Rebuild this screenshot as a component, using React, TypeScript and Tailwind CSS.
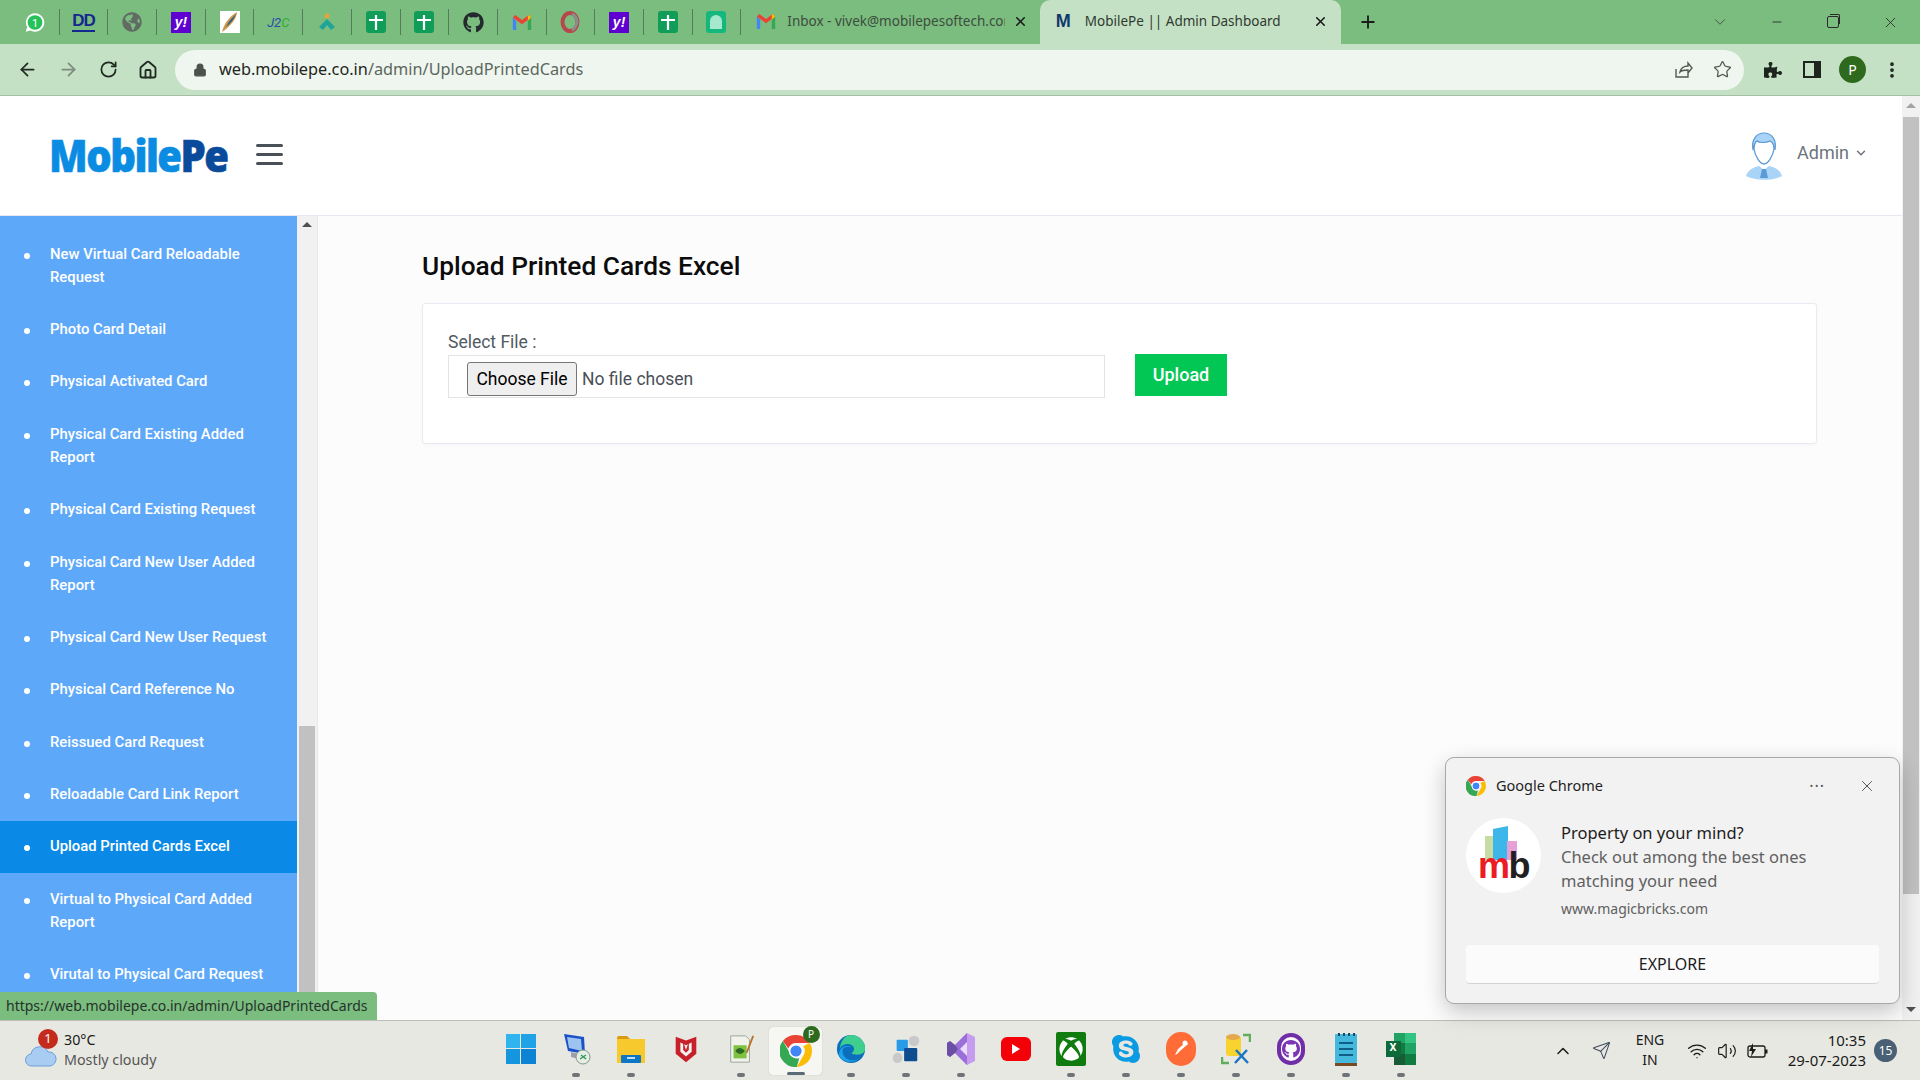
import { ArrowLeft, ArrowRight, ChevronDown, ChevronUp, Home, Lock, Minus, MoreVertical, Plus, RotateCw, Send, Star, Volume2, Wifi, X } from 'lucide-react';
import { FaGithub, FaGlobeAmericas, FaPuzzlePiece, FaSkype, FaXbox } from 'react-icons/fa';

const menuItems = [
  'New Virtual Card Reloadable Request',
  'Photo Card Detail',
  'Physical Activated Card',
  'Physical Card Existing Added Report',
  'Physical Card Existing Request',
  'Physical Card New User Added Report',
  'Physical Card New User Request',
  'Physical Card Reference No',
  'Reissued Card Request',
  'Reloadable Card Link Report',
  'Upload Printed Cards Excel',
  'Virtual to Physical Card Added Report',
  'Virutal to Physical Card Request',
];

function GmailIcon() {
  return (
    <svg viewBox="0 0 24 20" className="w-[20px] h-[17px]">
      <path d="M1 4v15h4V8z" fill="#4285f4" />
      <path d="M19 8v11h4V4z" fill="#34a853" />
      <path d="M1 4l11 8 11-8-3-3-8 6-8-6z" fill="#ea4335" />
      <path d="M19 8l4-4-3-3-1 1z" fill="#fbbc04" />
    </svg>
  );
}

function GreenPlus() {
  return (
    <div className="w-[20px] h-[22px] rounded-[3px] bg-[#0f9d58] flex items-center justify-center">
      <svg viewBox="0 0 20 22" className="w-full h-full">
        <path d="M10 4v15M3 9h14" stroke="#fff" strokeWidth="2.2" />
      </svg>
    </div>
  );
}

function YahooIcon() {
  return (
    <div className="w-[20px] h-[21px] bg-[#5f01d1] flex items-center justify-center text-white text-[14px] font-bold italic leading-none font-['Liberation_Sans',sans-serif]">
      y!
    </div>
  );
}

function ChromeIcon({ size }: { size: string }) {
  return (
    <svg viewBox="4 4 40 40" className={size}>
      <path d="M24 4a20 20 0 0 1 17.3 10H24a10 10 0 0 0-9.5 7L7.6 11.500A20 20 0 0 1 24 4z" fill="#ea4335" />
      <path d="M41.300 14A20 20 0 0 1 25 44l8.300-14.500A10 10 0 0 0 33 18z" fill="#fbbc04" />
      <path d="M7.600 11.500l8.700 15A10 10 0 0 0 28 33.200L25 44A20 20 0 0 1 7.600 11.500z" fill="#34a853" />
      <circle cx="24" cy="24" r="8" fill="#4285f4" stroke="#fff" strokeWidth="2" />
    </svg>
  );
}

const pinnedTabs = [
  <svg viewBox="0 0 24 24" className="w-[22px] h-[23px]"><path d="M12 2a10 10 0 0 0-8.600 15L2 22l5-1.400A10 10 0 1 0 12 2z" fill="#fff" /><circle cx="12" cy="12" r="8" fill="#25c25a" /><text x="12" y="16.500" textAnchor="middle" fontSize="12" fill="#fff" fontFamily="Roboto">1</text></svg>,
  <div className="text-[#14288f] text-[17px] font-black tracking-[-1px] leading-none font-['Liberation_Sans',sans-serif] border-b-2 border-[#14288f] pb-px">DD</div>,
  <FaGlobeAmericas className="w-[20px] h-[20px] text-[#5f6b63]" />,
  <YahooIcon />,
  <svg viewBox="0 0 20 22" className="w-[20px] h-[22px]"><rect width="20" height="22" fill="#fff" /><path d="M2 21C4 12 10 5 17 1c0 6-6 14-15 20z" fill="#c99a45" /><path d="M6 16C9 10 12 7 16 3c-2 5-5 9-10 13z" fill="#2f5c8f" /></svg>,
  <div className="text-[13px] italic leading-none font-['Roboto',sans-serif]"><span className="text-[#2a4fa8]">J2</span><span className="text-[#2fae2f]">C</span></div>,
  <svg viewBox="0 0 20 20" className="w-[20px] h-[20px]"><circle cx="10" cy="4" r="2.500" fill="#e6a33c" /><path d="M10 7l8 8-4 3-4-5-4 5-4-3z" fill="#1fa598" /></svg>,
  <GreenPlus />,
  <GreenPlus />,
  <FaGithub className="w-[21px] h-[21px] text-[#24292e]" />,
  <GmailIcon />,
  <svg viewBox="0 0 20 22" className="w-[20px] h-[22px]"><ellipse cx="10" cy="11" rx="7.500" ry="9" fill="none" stroke="#b5484b" strokeWidth="4" /><path d="M12 3c4 2 5 6 5 8s-2 7-5 8" fill="none" stroke="#8c8c8c" strokeWidth="3" /></svg>,
  <YahooIcon />,
  <GreenPlus />,
  <div className="w-[20px] h-[22px] rounded-[3px] bg-[#14b87c] flex items-start justify-center pt-[4px]"><div className="w-[12px] h-[14px] rounded-t-full bg-[#a5e8cd]" /></div>,
];

const TaskDot = () => <div className="w-[8px] h-[4px] rounded-full bg-[#6f7478]" />;

const WindowsIcon = (
  <div className="grid grid-cols-2 gap-[1.500px] w-[30px] h-[30px]">
    <div className="bg-[#2fb4ee]" />
    <div className="bg-[#1fa3e6]" />
    <div className="bg-[#1495de]" />
    <div className="bg-[#0d84d3]" />
  </div>
);

const taskbarIcons = [
  { dot: false, icon: WindowsIcon },
  {
    dot: true,
    icon: (
      <svg viewBox="0 0 30 32" className="w-[30px] h-[32px]">
        <path d="M3 1l20 3 1 17-17-3z" fill="#1c50c8" />
        <path d="M6 4l14 2 1 12-13-3z" fill="#9dc3f0" />
        <path d="M10 19l12 3v5l-12-3z" fill="#9aa1aa" />
        <circle cx="22" cy="24" r="7" fill="#e7ece6" stroke="#7d9a88" />
        <path d="M19 26l6-4M20 22l5 4" stroke="#2f9e55" strokeWidth="1.500" />
      </svg>
    ),
  },
  {
    dot: true,
    icon: (
      <svg viewBox="0 0 30 28" className="w-[30px] h-[28px]">
        <path d="M1 3a2 2 0 0 1 2-2h8l3 3H1z" fill="#d99a12" />
        <rect x="1" y="4" width="28" height="24" fill="#f8c92c" />
        <rect x="5" y="20" width="20" height="8" rx="1" fill="#0f76c6" />
        <rect x="11" y="22" width="8" height="2" fill="#b9e0f7" />
      </svg>
    ),
  },
  {
    dot: false,
    icon: (
      <svg viewBox="0 0 26 32" className="w-[26px] h-[30px]">
        <path d="M2 3l11 4 11-4v18l-11 9-11-9z" fill="#c8202b" />
        <path d="M7 9l6 3 6-3v10l-6 5-6-5z" fill="#f3f3f0" />
        <path d="M10 8l3 9 3-9v9l-3 3-3-3z" fill="#c8202b" />
      </svg>
    ),
  },
  {
    dot: true,
    icon: (
      <svg viewBox="0 0 28 32" className="w-[28px] h-[30px]">
        <path d="M3 2h16l4 4v24H3z" fill="#f0f3ea" stroke="#9aa29a" />
        <rect x="6" y="12" width="14" height="14" fill="#7ec242" />
        <path d="M8 18c3-4 6-4 10 0-3 4-7 4-10 0z" fill="#2a6a22" />
        <path d="M20 20L27 2" stroke="#b8742a" strokeWidth="2" />
      </svg>
    ),
  },
  { dot: false, icon: null },
  {
    dot: true,
    icon: (
      <svg viewBox="0 0 32 32" className="w-[30px] h-[32px]">
        <circle cx="16" cy="16" r="15" fill="#0d6ebd" />
        <path d="M16 1a15 15 0 0 1 15 15c0 5-5 6-9 6-3 0-6-1-5-2 3-2 3-6 0-8-5-3-12 0-13 4C5 8 9 1 16 1z" fill="#3ecf8e" />
        <path d="M7 18c0 8 8 12 17 9-5 4-16 4-20-3-1-2-1-4 0-6 1-4 8-7 13-4-5-1-10 0-10 4z" fill="#1aa3e8" />
      </svg>
    ),
  },
  {
    dot: true,
    icon: (
      <svg viewBox="0 0 30 32" className="w-[30px] h-[30px]">
        <rect x="18" y="2" width="11" height="11" rx="5" fill="#c9c9c9" />
        <rect x="1" y="20" width="10" height="11" rx="5" fill="#c9c9c9" />
        <rect x="5" y="6" width="12" height="12" rx="1" fill="#2a9be8" />
        <rect x="13" y="15" width="14" height="14" rx="1" fill="#0d4d8f" />
      </svg>
    ),
  },
  {
    dot: true,
    icon: (
      <svg viewBox="0 0 30 34" className="w-[30px] h-[34px]">
        <path d="M21 1l8 4v24l-8 4-12-12-5 4-3-2V11l3-2 5 4z" fill="#c59cf0" />
        <path d="M21 1v32L9 21l-1-4 1-4z" fill="#9a6fd8" />
        <path d="M1 11l3-2 5 4 3 4-3 4-5 4-3-2z" fill="#6c4fa5" />
        <path d="M21 10l-7 7 7 7z" fill="#eadcfb" />
      </svg>
    ),
  },
  {
    dot: false,
    icon: (
      <div className="w-[30px] h-[24px] rounded-[6px] bg-[#f40009] flex items-center justify-center">
        <svg viewBox="0 0 10 10" className="w-[10px] h-[10px]"><path d="M1 0l8 5-8 5z" fill="#fff" /></svg>
      </div>
    ),
  },
  {
    dot: true,
    icon: (
      <div className="w-[30px] h-[34px] bg-[#107c10] rounded-[2px] flex items-center justify-center">
        <FaXbox className="w-[24px] h-[24px] text-white" />
      </div>
    ),
  },
  { dot: true, icon: <FaSkype className="w-[30px] h-[32px] text-[#0a9be2]" /> },
  {
    dot: true,
    icon: (
      <div className="w-[30px] h-[34px] rounded-full bg-[#ff6c37] flex items-center justify-center">
        <svg viewBox="0 0 20 20" className="w-[20px] h-[20px]"><path d="M15 3l2 2-8 7-3 3-2 1 1-2 2-4z" fill="#fff" /><circle cx="14" cy="4" r="2.500" fill="#fff" /></svg>
      </div>
    ),
  },
  {
    dot: true,
    icon: (
      <svg viewBox="0 0 30 32" className="w-[30px] h-[32px]">
        <rect x="5" y="3" width="15" height="20" rx="3" fill="#f8d330" />
        <ellipse cx="12" cy="4" rx="7" ry="3" fill="#e3a94c" />
        <path d="M1 24v6h7M22 2h7v7" fill="none" stroke="#5fae5b" strokeWidth="2.500" />
        <path d="M14 30l12-13M27 30L15 17" stroke="#1a75c4" strokeWidth="2.500" />
      </svg>
    ),
  },
  {
    dot: true,
    icon: (
      <div className="w-[28px] h-[32px] rounded-full border-[4px] border-[#6f2da8] bg-[#fafafa] flex items-center justify-center">
        <FaGithub className="w-[18px] h-[20px] text-[#7a35b5]" />
      </div>
    ),
  },
  {
    dot: true,
    icon: (
      <svg viewBox="0 0 24 34" className="w-[24px] h-[34px]">
        <rect x="1" y="2" width="22" height="29" rx="1" fill="#45b8de" />
        <rect x="1" y="31" width="22" height="3" fill="#7a4a22" />
        <path d="M5 11h14M5 17h14M5 23h14" stroke="#0d5f87" strokeWidth="2" />
        <path d="M5 1v3M10 1v3M15 1v3M20 1v3" stroke="#134c69" strokeWidth="2" />
      </svg>
    ),
  },
  {
    dot: true,
    icon: (
      <div className="relative w-[30px] h-[32px]">
        <div className="absolute right-0 top-0 w-[22px] h-[32px] grid grid-cols-2 grid-rows-3">
          <div className="bg-[#21a366]" />
          <div className="bg-[#33c481]" />
          <div className="bg-[#107c41]" />
          <div className="bg-[#21a366]" />
          <div className="bg-[#185c37]" />
          <div className="bg-[#107c41]" />
        </div>
        <div className="absolute left-0 top-[8px] w-[15px] h-[16px] bg-[#0e6a38] text-white text-[11px] font-bold flex items-center justify-center font-['Roboto',sans-serif]">
          X
        </div>
      </div>
    ),
  },
];

export default function App() {
  return (
    <div className="relative w-[1920px] h-[1080px] overflow-hidden flex flex-col bg-white font-['Roboto',sans-serif]">
      {/* tab strip */}
      <div className="h-[44px] shrink-0 bg-[#7bbc7f] flex items-center pl-[11px] font-['Noto_Sans',sans-serif]">
        {pinnedTabs.map((icon, i) => (
          <div key={i} className="w-[48.700px] h-[26px] flex items-center justify-center border-r border-[#58795a]">
            {icon}
          </div>
        ))}
        <div className="w-[298.500px] h-[44px] flex items-center pl-[15px] pr-[12px] pb-[2px]">
          <GmailIcon />
          <span className="ml-[11px] w-[218px] overflow-hidden whitespace-nowrap text-[13.500px] text-[#3d4d3e]">Inbox - vivek@mobilepesoftech.com</span>
          <X className="ml-auto w-[15px] h-[15px] text-[#1a1a1a]" strokeWidth={2.500} />
        </div>
        <div className="w-[301px] h-[44px] rounded-t-[10px] bg-[#c5e1c5] flex items-center pl-[16px] pr-[13px] pb-[2px]">
          <span className="text-[#0f3a6e] text-[18px] font-bold leading-none w-[29px] font-['Liberation_Sans',sans-serif]">M</span>
          <span className="text-[13.500px] text-[#2f3a30] whitespace-nowrap">MobilePe || Admin Dashboard</span>
          <X className="ml-auto w-[15px] h-[15px] text-[#1a1a1a]" strokeWidth={2.500} />
        </div>
        <Plus className="ml-[17px] w-[20px] h-[20px] text-[#1c1c1c]" strokeWidth={2.200} />
        <ChevronDown className="ml-[333px] w-[18px] h-[18px] text-[#3c4a3d]" strokeWidth={1.200} />
        <Minus className="ml-[41px] w-[14px] h-[14px] text-[#2a2a2a]" strokeWidth={1.500} />
        <div className="ml-[43px] relative w-[12px] h-[12px] border border-[#2a2a2a] rounded-[2px]">
          <div className="absolute -top-[3px] left-[2px] w-[10px] h-[10px] border-t border-r border-[#2a2a2a] rounded-tr-[2px]" />
        </div>
        <X className="ml-[43px] w-[17px] h-[17px] text-[#2a2a2a]" strokeWidth={1.200} />
      </div>

      {/* toolbar */}
      <div className="h-[52px] shrink-0 bg-[#c5e1c5] border-b border-[#a5bfa6] flex items-center font-['Noto_Sans',sans-serif]">
        <div className="w-[175px] flex items-center pl-[17px] gap-[20px]">
          <ArrowLeft className="w-[21px] h-[21px] text-[#1f2a20]" strokeWidth={2} />
          <ArrowRight className="w-[21px] h-[21px] text-[#7c8b7d]" strokeWidth={2} />
          <RotateCw className="w-[19px] h-[19px] text-[#1f2a20]" strokeWidth={2.200} />
          <Home className="w-[20px] h-[20px] text-[#1f2a20]" strokeWidth={2.200} />
        </div>
        <div className="w-[1569px] h-[40px] rounded-full bg-[#eff6ef] flex items-center pl-[18px] pr-[12px]">
          <Lock className="w-[14px] h-[14px] text-[#4a534b] fill-[#4a534b]" />
          <span className="ml-[12px] text-[16.300px] text-[#1f2620]">web.mobilepe.co.in</span>
          <span className="text-[16.300px] text-[#5c665d]">/admin/UploadPrintedCards</span>
          <svg viewBox="0 0 20 20" className="ml-auto w-[20px] h-[20px] text-[#4f5a50]" fill="none" stroke="currentColor" strokeWidth="1.400">
            <path d="M3 9v8h12v-4M7 12c1-4 4-6 8-6V3l4 5-4 5v-3c-3 0-6 0-8 2z" />
          </svg>
          <Star className="ml-[20px] w-[19px] h-[19px] text-[#4f5a50]" strokeWidth={1.600} />
        </div>
        <FaPuzzlePiece className="ml-[20px] w-[18px] h-[18px] text-[#1d241e]" />
        <div className="ml-[21px] w-[18px] h-[17px] border-2 border-[#1d241e] border-r-[7px]" />
        <div className="ml-[18px] w-[27px] h-[27px] rounded-full bg-[#2d6a1e] text-white text-[14px] flex items-center justify-center">P</div>
        <MoreVertical className="ml-[16px] w-[20px] h-[20px] text-[#1d241e]" strokeWidth={2.500} />
      </div>

      {/* page */}
      <div className="flex-1 min-h-0 flex">
        <div className="flex-1 min-w-0 flex flex-col">
          <header className="h-[120px] shrink-0 bg-white border-b border-[#e6e9f0] flex items-center">
            <div className="w-[256px] pl-[49px] text-[40px] leading-none font-black tracking-[-1.500px] scale-y-[1.1] [-webkit-text-stroke:0.600px_currentColor] font-['Open_Sans',sans-serif] -mt-[2px] whitespace-nowrap">
              <span className="text-[#0b8ce3]">Mobile</span>
              <span className="text-[#0a4a9b]">Pe</span>
            </div>
            <div className="w-[27px] flex flex-col gap-[6px] -mt-[3px]">
              <div className="h-[3px] rounded-full bg-[#495057]" />
              <div className="h-[3px] rounded-full bg-[#495057]" />
              <div className="h-[3px] rounded-full bg-[#495057]" />
            </div>
            <div className="ml-auto flex items-center pr-[34px]">
              <svg viewBox="0 0 38 48" className="w-[38px] h-[48px] mr-[14px]">
                <path d="M1 44c2-7 9-9 13-10l5 4 5-4c4 1 11 3 13 10-10 5-26 5-36 0z" fill="#a9d4f7" />
                <path d="M17 37h4l2 9h-8z" fill="#5a9bd5" />
                <path d="M9 17c0-9 5-14 10-14s10 5 10 14c-1 7-6 15-10 15S10 24 9 17z" fill="#fff" stroke="#5a9bd5" strokeWidth="1.300" />
                <path d="M8 18C6 7 12 1 19 1s13 6 11 17c-1-5-2-8-5-9-4 2-11 2-13 0-3 2-3 5-4 9z" fill="#a9d4f7" stroke="#5a9bd5" strokeWidth="1.200" />
              </svg>
              <span className="-mt-[7px] text-[18px] text-[#6c757d]">Admin</span>
              <ChevronDown className="-mt-[6px] ml-[5px] w-[14px] h-[14px] text-[#6c757d]" strokeWidth={2.500} />
            </div>
          </header>

          <div className="flex-1 min-h-0 flex bg-[#fcfcfd]">
            {/* sidebar */}
            <aside className="w-[297px] shrink-0 bg-[#5ea8fa] overflow-hidden pt-[12px]">
              <ul>
                {menuItems.map((item) => (
                  <li
                    key={item}
                    className={`flex py-[14.700px] pl-[24px] pr-[20px] text-[14.850px] leading-[23px] font-medium text-white ${item === 'Upload Printed Cards Excel' ? 'bg-[#0a8ae6]' : ''}`}
                  >
                    <span className="w-[26px] shrink-0 pt-[10px]">
                      <span className="block w-[6px] h-[6px] rounded-full bg-white" />
                    </span>
                    <span>{item}</span>
                  </li>
                ))}
              </ul>
            </aside>
            <div className="w-[21px] shrink-0 bg-[#f1f1f1] border-r border-[#e4e8ef] flex flex-col items-center pr-px">
              <div className="mt-[6px] w-0 h-0 border-x-[5px] border-x-transparent border-b-[5px] border-b-[#505050]" />
              <div className="mt-auto w-[16px] h-[294px] bg-[#c1c1c1]" />
            </div>

            {/* main */}
            <main className="flex-1 min-w-0 pl-[104px] pr-[85px] pt-[33px]">
              <h1 className="text-[26.300px] leading-[34px] font-medium text-[#0c0c0c]">Upload Printed Cards Excel</h1>
              <div className="mt-[20px] h-[141px] bg-white border border-[#e9ebf2] rounded-[3px] shadow-[0_1px_3px_rgba(0,0,0,0.03)] pl-[25px] pt-[26px]">
                <label className="block text-[17.500px] leading-[25px] text-[#505a63]">Select File :</label>
                <div className="flex items-start">
                  <input
                    type="file"
                    className="w-[657px] h-[43px] bg-white border border-[#e2e4e8] pl-[18px] pt-[6px] text-[17.500px] leading-[26px] text-[#495057] file:w-[110px] file:h-[34px] file:mr-[5px] file:rounded-[3px] file:border file:border-[#767676] file:bg-[#efefef] file:text-black file:text-[17.500px]"
                  />
                  <button className="ml-[30px] -mt-px w-[92px] h-[42px] pb-[2px] bg-[#03c754] text-white text-[18px] font-medium">Upload</button>
                </div>
              </div>
            </main>
          </div>
        </div>

        {/* page scrollbar */}
        <div className="w-[18px] shrink-0 bg-[#f1f1f1] flex flex-col items-center">
          <div className="mt-[7px] w-0 h-0 border-x-[5px] border-x-transparent border-b-[5px] border-b-[#a3a3a3]" />
          <div className="mt-[9px] w-[16px] h-[777px] bg-[#c1c1c1]" />
          <div className="mt-auto mb-[8px] w-0 h-0 border-x-[5px] border-x-transparent border-t-[5px] border-t-[#505050]" />
        </div>
      </div>

      {/* taskbar */}
      <footer className="h-[60px] shrink-0 bg-[#e8e8e2] border-t border-[#bdbdb8] flex items-center relative font-['Noto_Sans',sans-serif]">
        <div className="w-[493px] shrink-0 flex items-center pl-[25px]">
          <div className="relative w-[30px] h-[32px]">
            <svg viewBox="0 0 32 22" className="absolute left-0 bottom-0 w-[32px] h-[22px]">
              <path d="M7 21a6 6 0 0 1-1-12 9 9 0 0 1 17-2 7 7 0 0 1 2 14z" fill="#a9cdf2" stroke="#6da0d8" />
            </svg>
            <div className="absolute left-[13px] -top-[6px] w-[20px] h-[20px] rounded-full bg-[#c42b1c] text-white text-[13px] flex items-center justify-center">1</div>
          </div>
          <div className="ml-[9px] -mt-[2px] text-[14.300px] leading-[20px]">
            <div className="text-[#1a1a1a]">30°C</div>
            <div className="text-[#555]">Mostly cloudy</div>
          </div>
        </div>
        <div className="flex items-center">
          {taskbarIcons.map((t, i) =>
            t.icon ? (
              <div key={i} className="w-[55px] h-[60px] flex flex-col items-center relative">
                <div className="h-[52px] pt-[4px] flex items-center justify-center">{t.icon}</div>
                {t.dot && <TaskDot />}
              </div>
            ) : (
              <div key={i} className="w-[55px] h-[60px] flex items-center justify-center relative">
                <div className="absolute inset-x-[1px] top-[6px] bottom-[6px] rounded-[4px] bg-[#f6f6f3] shadow-[0_0_1px_rgba(0,0,0,0.3)]" />
                <div className="relative">
                  <ChromeIcon size="w-[32px] h-[32px]" />
                  <div className="absolute -right-[8px] -top-[9px] w-[17px] h-[17px] rounded-full bg-[#2d6a1e] text-white text-[10px] flex items-center justify-center">P</div>
                </div>
                <div className="absolute bottom-[6px] left-1/2 -translate-x-1/2 w-[18px] h-[3px] rounded-full bg-[#5a6b78]" />
              </div>
            ),
          )}
        </div>
        <div className="ml-auto flex items-center pr-[23px] text-[#1a1a1a]">
          <ChevronUp className="w-[20px] h-[20px]" strokeWidth={1.800} />
          <Send className="ml-[19px] w-[19px] h-[19px] text-[#3c4a58]" strokeWidth={1.300} />
          <div className="ml-[19px] -mt-[2px] w-[40px] text-center text-[14px] leading-[20px]">ENG<br />IN</div>
          <Wifi className="ml-[17px] w-[20px] h-[20px]" strokeWidth={1.600} />
          <Volume2 className="ml-[10px] w-[20px] h-[20px]" strokeWidth={1.400} />
          <svg viewBox="0 0 22 16" className="ml-[10px] w-[22px] h-[16px]">
            <rect x="1" y="3" width="17" height="11" rx="2" fill="none" stroke="#1a1a1a" strokeWidth="1.300" />
            <rect x="18" y="6.500" width="2.500" height="4" fill="#1a1a1a" />
            <path d="M6 0L2 8h3l-1 6 5-8H6z" fill="#1a1a1a" />
          </svg>
          <div className="ml-[12px] -mt-[2px] w-[85px] text-right text-[15px] leading-[20px] whitespace-nowrap">10:35<br />29-07-2023</div>
          <div className="ml-[8px] w-[23px] h-[23px] rounded-full bg-[#4a6075] text-white text-[12px] flex items-center justify-center">15</div>
        </div>
      </footer>

      {/* link status bubble */}
      <div className="absolute left-0 top-[992px] w-[377px] h-[28px] rounded-tr-[4px] bg-[#7bbc7f] pl-[6px] text-[14px] leading-[28px] text-[#25332a] font-['Noto_Sans',sans-serif] overflow-hidden whitespace-nowrap">
        https://web.mobilepe.co.in/admin/UploadPrintedCards
      </div>

      {/* chrome notification */}
      <div className="absolute left-[1445px] top-[757px] w-[455px] h-[247px] rounded-[9px] bg-[#f2f2f2] border border-[#a8a8a8] shadow-[0_8px_22px_rgba(0,0,0,0.22)] font-['Noto_Sans',sans-serif] px-[20px] pt-[18px]">
        <div className="flex items-center h-[20px]">
          <ChromeIcon size="w-[20px] h-[20px]" />
          <span className="ml-[10px] text-[14.500px] text-[#1f1f1f]">Google Chrome</span>
          <span className="ml-auto text-[#555] text-[16px] tracking-[1px] leading-none">···</span>
          <X className="ml-[33px] mr-[3px] w-[18px] h-[18px] text-[#444]" strokeWidth={1.200} />
        </div>
        <div className="mt-[22px] flex">
          <div className="relative w-[75px] h-[75px] shrink-0 rounded-full bg-white overflow-hidden">
            <svg viewBox="0 0 75 75" className="absolute inset-0 w-[75px] h-[75px]">
              <rect x="19" y="18" width="15" height="24" fill="#c6dca2" />
              <path d="M27 11l15-3v34H27z" fill="#3db6ea" />
              <rect x="41" y="23" width="10" height="19" fill="#e5a0d8" />
            </svg>
            <span className="absolute left-[12px] top-[30px] text-[36px] leading-[36px] font-bold tracking-[-1.500px] font-['Liberation_Sans',sans-serif]">
              <span className="text-[#ed1c24]">m</span>
              <span className="text-[#231f20]">b</span>
            </span>
          </div>
          <div className="ml-[20px] mt-[3px]">
            <div className="text-[16.500px] leading-[24px] text-[#1c1c1c]">Property on your mind?</div>
            <div className="text-[16.500px] leading-[24px] text-[#606060]">Check out among the best ones<br />matching your need</div>
            <div className="mt-[5px] text-[14px] leading-[22px] text-[#606060]">www.magicbricks.com</div>
          </div>
        </div>
        <button className="mt-[25px] block w-[413px] h-[39px] rounded-[4px] bg-[#fbfbfb] border-b border-[#d4d4d4] text-[16px] text-[#1c1c1c]">EXPLORE</button>
      </div>
    </div>
  );
}
